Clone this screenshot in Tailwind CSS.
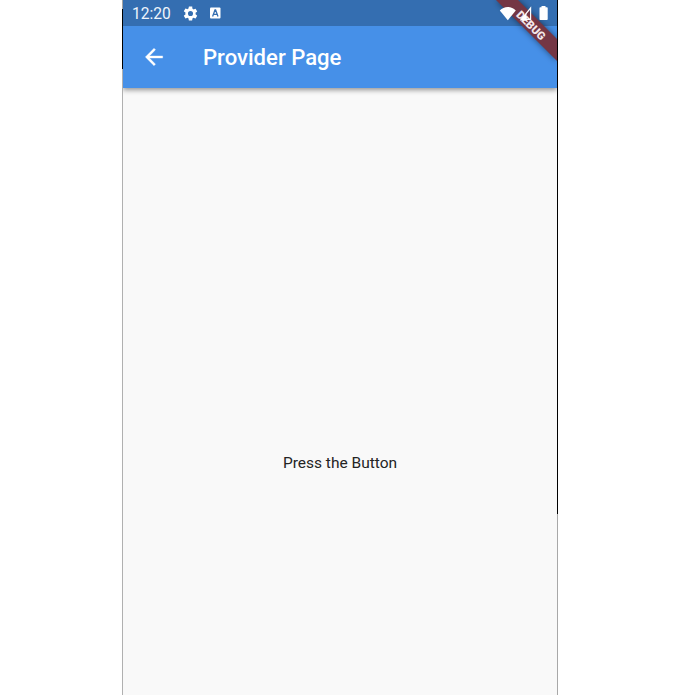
<!DOCTYPE html>
<html lang="en">
<head>
<meta charset="utf-8">
<title>Provider Page</title>
<script src="https://cdn.jsdelivr.net/npm/@tailwindcss/browser@4"></script>
</head>
<body class="bg-white font-[Roboto,sans-serif]">
<div class="mx-auto flex h-[695px] w-[436px] overflow-hidden">
  <div class="flex w-px shrink-0 flex-col">
    <div class="h-[9px] bg-[#a3a3a3]"></div>
    <div class="h-[60px] bg-black"></div>
    <div class="flex-1 bg-[#b0b0b0]"></div>
  </div>
  <div class="relative flex w-[434px] flex-col overflow-hidden bg-[#f9f9f9]">
    <header class="relative bg-[#4690e8] shadow-[0_2px_5px_rgba(0,0,0,0.42)]">
      <div class="flex h-[26px] items-center bg-[#346eb1] pl-[9px] text-white">
        <span class="w-[39px] pt-px text-[15.6px] leading-[26px] whitespace-nowrap text-[#eef5fc]">12:20</span>
        <svg class="ml-[11px] h-[17px] w-[17px]" viewBox="0 0 24 24" fill="currentColor"><path d="M19.14 12.94c.04-.3.06-.61.06-.94s-.02-.64-.07-.94l2.03-1.58a.49.49 0 0 0 .12-.61l-1.92-3.32a.49.49 0 0 0-.59-.22l-2.39.96a7 7 0 0 0-1.62-.94l-.36-2.54A.48.48 0 0 0 13.92 2h-3.84a.48.48 0 0 0-.48.41l-.36 2.54a7.3 7.3 0 0 0-1.62.94l-2.39-.96a.48.48 0 0 0-.59.22L2.72 8.47a.48.48 0 0 0 .12.61l2.03 1.58a7.5 7.5 0 0 0 0 2.68l-2.03 1.58a.49.49 0 0 0-.12.61l1.92 3.32c.12.22.37.29.59.22l2.39-.96c.5.38 1.03.7 1.62.94l.36 2.54c.05.24.24.41.48.41h3.84c.24 0 .44-.17.47-.41l.36-2.54a7 7 0 0 0 1.62-.94l2.39.96c.22.08.47 0 .59-.22l1.92-3.32a.48.48 0 0 0-.12-.61zM12 15.6a3.6 3.6 0 1 1 0-7.2 3.6 3.6 0 0 1 0 7.2z"/></svg>
        <svg class="ml-[11px] h-[12px] w-[11px]" viewBox="0 0 11 12"><rect y=".5" width="10.5" height="11" rx="1" fill="#fff"/><path d="M2.6 9.5 5 3h.6L8 9.5M3.6 7.4h3.4" fill="none" stroke="#346eb1" stroke-width="1.3"/></svg>
        <div class="relative z-10 mr-[9px] ml-auto flex items-center">
          <svg class="h-[15px] w-[17px]" viewBox="0 0 17 15"><path d="M.8 4.6C5-.1 12.4-.1 16.8 4.6L8.8 14.3z" fill="#fff"/></svg>
          <svg class="ml-[3px] h-[15px] w-[14px]" viewBox="0 0 14 15"><path d="M11.6 2V13.3H2.4z" fill="none" stroke="#fff" stroke-width="1.2"/><path d="M.6 14.4 7.5 7.4V14.4z" fill="#fff"/></svg>
          <svg class="ml-[6px] h-[14px] w-[9px]" viewBox="0 0 9 14"><path d="M2.5 0h4v1.2h1.4q.8 0 .8.7v11.3q0 .8-.8.8H1.3q-.8 0-.8-.8V1.9q0-.7.8-.7h1.2z" fill="#fff"/></svg>
        </div>
      </div>
      <div class="flex h-[61.5px] items-center pl-[18px] text-white">
        <svg class="h-[26px] w-[26px]" viewBox="0 0 24 24" fill="currentColor" stroke="currentColor" stroke-width=".3"><path d="M20 11H7.83l5.59-5.59L12 4l-8 8 8 8 1.41-1.41L7.83 13H20z"/></svg>
        <h1 class="ml-[36px] pt-px text-[22.1px] leading-[30px] font-medium whitespace-nowrap">Provider Page</h1>
      </div>
    </header>
    <main class="flex flex-1 justify-center pt-[363.5px]">
      <p class="h-6 text-[15.5px] leading-6 whitespace-nowrap text-[#242424]">Press the Button</p>
    </main>
    <svg class="absolute top-0 right-0 h-[72px] w-[72px]" viewBox="0 0 72 72">
      <defs><filter id="shade" x="-30%" y="-30%" width="160%" height="160%"><feGaussianBlur stdDeviation="3"/></filter></defs>
      <path d="M11 0 72 61V39L33 0z" fill="#000" fill-opacity=".5" filter="url(#shade)"/>
      <path d="M11 0 72 61V39L33 0z" fill="#743644"/>
      <text transform="translate(46 25.4) rotate(45)" text-anchor="middle" y="4" font-family="Roboto, sans-serif" font-size="11.2" font-weight="900" fill="#f3e8eb">DEBUG</text>
    </svg>
  </div>
  <div class="flex w-px shrink-0 flex-col">
    <div class="h-[514px] bg-black"></div>
    <div class="flex-1 bg-[#a8a8a8]"></div>
  </div>
</div>
</body>
</html>
